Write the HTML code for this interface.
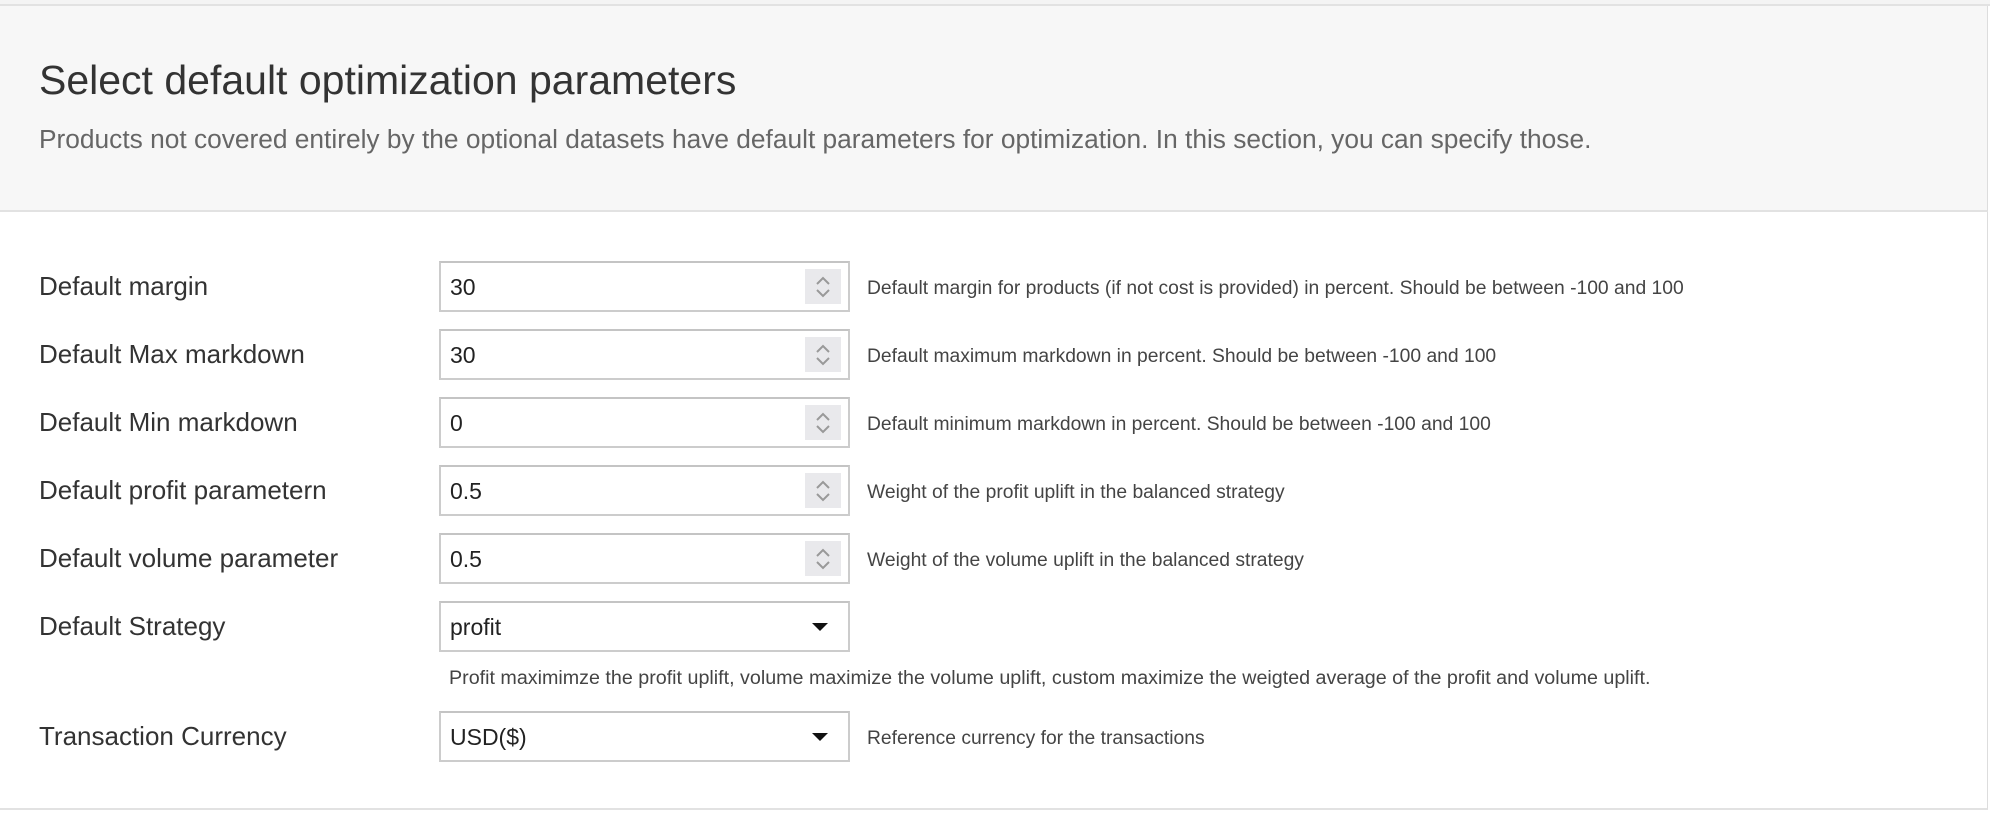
<!DOCTYPE html>
<html><head><style>
*{margin:0;padding:0;box-sizing:border-box}
body{width:1990px;height:814px;background:#fff;font-family:"Liberation Sans",sans-serif;position:relative;overflow:hidden;color:#333}
.top{position:absolute;left:0;top:0;width:1990px;height:6px;background:#f4f4f4;border-bottom:2px solid #e2e2e2}
.hdr{position:absolute;left:0;top:6px;width:1988px;height:206px;background:#f7f7f7;border-bottom:2px solid #e2e2e2;border-right:1px solid #ddd}
.hdr h1{position:absolute;left:39px;top:51px;font-size:41px;font-weight:normal;color:#333}
.hdr p{position:absolute;left:39px;top:118px;font-size:26.3px;color:#666}
.body{position:absolute;left:0;top:212px;width:1988px;height:598px;border-right:1px solid #ddd;border-bottom:2px solid #e2e2e2}
.lbl{position:absolute;left:39px;font-size:26px;color:#333;line-height:50px}
.inp{position:absolute;left:439px;width:411px;height:51px;border:2px solid #ccc;border-top-color:#c4c4c4;background:#fff;font-size:23px;line-height:49px;padding-left:9px;color:#222}
.spin{position:absolute;right:7px;top:6px;width:36px;height:35px;background:#e9e9ec}
.spin svg{position:absolute;left:10px;top:6px}
.arr{position:absolute;right:20px;top:20px;width:0;height:0;border-left:8px solid transparent;border-right:8px solid transparent;border-top:8px solid #111}
.help{position:absolute;left:867px;font-size:19.3px;color:#444;line-height:50px;margin-top:3px}
</style></head><body>
<div class="top"></div>
<div class="hdr"><h1>Select default optimization parameters</h1><p>Products not covered entirely by the optional datasets have default parameters for optimization. In this section, you can specify those.</p></div>
<div class="body"></div>

<div class="lbl" style="top:261px">Default margin</div>
<div class="inp" style="top:261px">30<div class="spin"><svg width="16" height="24"><path d="M2 9 L8 3 L14 9 M2 15 L8 21 L14 15" fill="none" stroke="#999" stroke-width="2"/></svg></div></div>
<div class="help" style="top:261px">Default margin for products (if not cost is provided) in percent. Should be between -100 and 100</div>

<div class="lbl" style="top:329px">Default Max markdown</div>
<div class="inp" style="top:329px">30<div class="spin"><svg width="16" height="24"><path d="M2 9 L8 3 L14 9 M2 15 L8 21 L14 15" fill="none" stroke="#999" stroke-width="2"/></svg></div></div>
<div class="help" style="top:329px">Default maximum markdown in percent. Should be between -100 and 100</div>

<div class="lbl" style="top:397px">Default Min markdown</div>
<div class="inp" style="top:397px">0<div class="spin"><svg width="16" height="24"><path d="M2 9 L8 3 L14 9 M2 15 L8 21 L14 15" fill="none" stroke="#999" stroke-width="2"/></svg></div></div>
<div class="help" style="top:397px">Default minimum markdown in percent. Should be between -100 and 100</div>

<div class="lbl" style="top:465px">Default profit parametern</div>
<div class="inp" style="top:465px">0.5<div class="spin"><svg width="16" height="24"><path d="M2 9 L8 3 L14 9 M2 15 L8 21 L14 15" fill="none" stroke="#999" stroke-width="2"/></svg></div></div>
<div class="help" style="top:465px">Weight of the profit uplift in the balanced strategy</div>

<div class="lbl" style="top:533px">Default volume parameter</div>
<div class="inp" style="top:533px">0.5<div class="spin"><svg width="16" height="24"><path d="M2 9 L8 3 L14 9 M2 15 L8 21 L14 15" fill="none" stroke="#999" stroke-width="2"/></svg></div></div>
<div class="help" style="top:533px">Weight of the volume uplift in the balanced strategy</div>

<div class="lbl" style="top:601px">Default Strategy</div>
<div class="inp" style="top:601px">profit<div class="arr"></div></div>
<div class="help" style="top:650px;left:449px;font-size:19.7px">Profit maximimze the profit uplift, volume maximize the volume uplift, custom maximize the weigted average of the profit and volume uplift.</div>

<div class="lbl" style="top:711px">Transaction Currency</div>
<div class="inp" style="top:711px">USD($)<div class="arr"></div></div>
<div class="help" style="top:711px">Reference currency for the transactions</div>
</body></html>
